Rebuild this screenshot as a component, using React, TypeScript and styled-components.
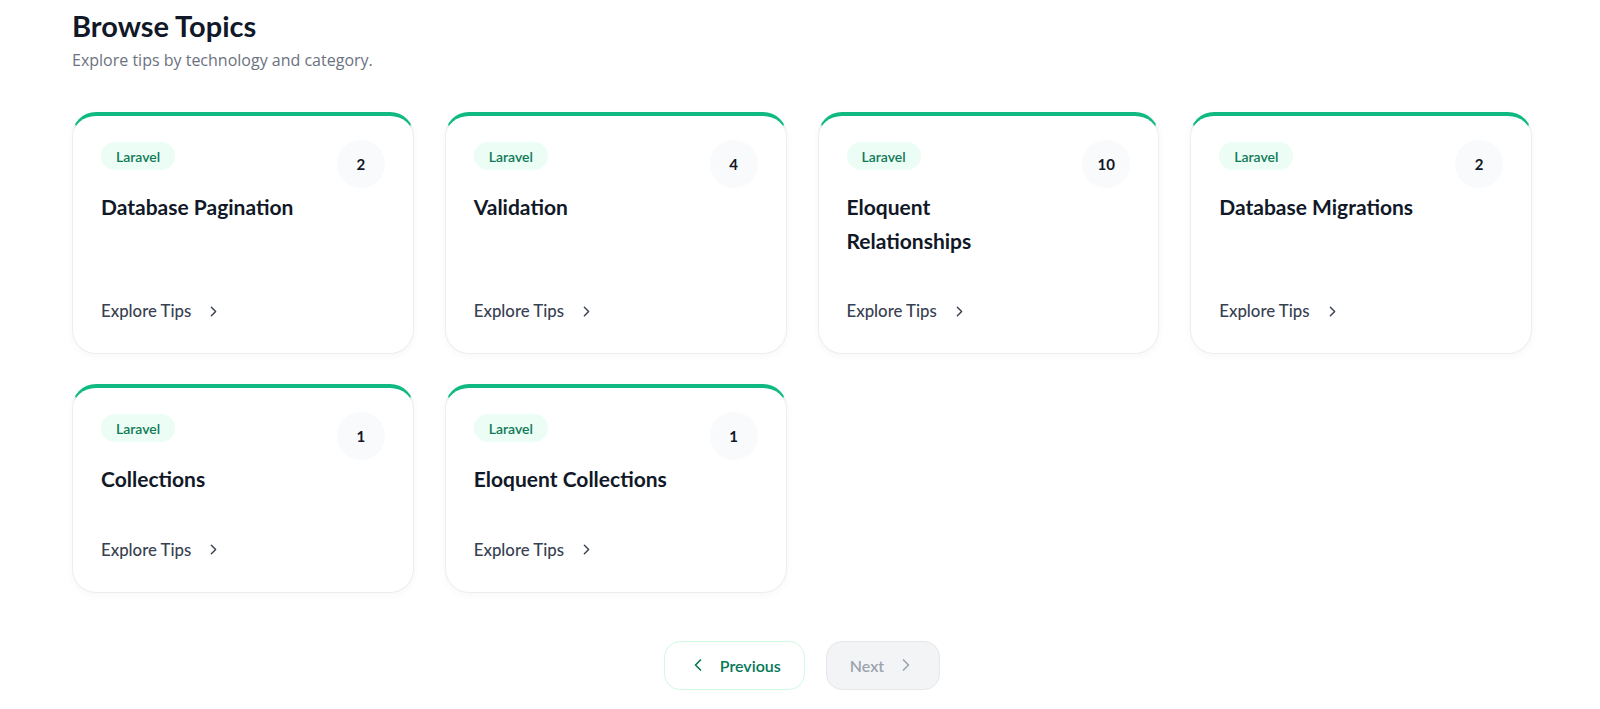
import React from "react";
import styled, { createGlobalStyle } from "styled-components";

const GlobalStyle = createGlobalStyle`
  html, body { margin: 0; padding: 0; background: #ffffff; }
  body { font-family: Lato, "Open Sans", sans-serif; -webkit-font-smoothing: antialiased; }
  * { box-sizing: border-box; }
`;

const Page = styled.main`
  padding: 8px 0 0 72px;
  width: 1532px;
`;

const Heading = styled.h1`
  margin: 0;
  font-size: 29px;
  line-height: 36px;
  font-weight: 700;
  color: #111827;
`;

const Subtitle = styled.p`
  margin: 5px 0 0;
  font-family: "Open Sans", Lato, sans-serif;
  font-size: 16px;
  line-height: 22px;
  color: #6b7280;
`;

const Grid = styled.div`
  margin-top: 41px;
  display: grid;
  grid-template-columns: repeat(4, 1fr);
  column-gap: 31px;
  row-gap: 30px;
`;

const Card = styled.article`
  display: flex;
  flex-direction: column;
  background: #ffffff;
  border: 1px solid #ebeef1;
  border-top: 4px solid #10b981;
  border-radius: 24px;
  padding: 24px 28px 30px;
  box-shadow: 0 2px 8px rgba(15, 23, 42, 0.035);
`;

const Header = styled.div`
  display: flex;
  justify-content: space-between;
  align-items: flex-start;
  gap: 24px;
`;

const Info = styled.div`
  display: flex;
  flex-direction: column;
  align-items: flex-start;
  min-width: 0;
`;

const Badge = styled.span`
  margin-top: 2px;
  display: inline-flex;
  align-items: center;
  height: 28px;
  padding: 0 15px;
  border-radius: 999px;
  background: #ecfdf5;
  color: #0f7a58;
  font-size: 14px;
  font-weight: 600;
`;

const Title = styled.h2`
  margin: 20px 0 0;
  font-size: 21px;
  line-height: 33.6px;
  font-weight: 700;
  color: #111827;
`;

const Count = styled.span`
  flex: 0 0 48px;
  width: 48px;
  height: 48px;
  border-radius: 50%;
  background: #f8fafc;
  display: flex;
  align-items: center;
  justify-content: center;
  font-size: 15px;
  font-weight: 700;
  color: #111827;
`;

const Footer = styled.a`
  margin-top: auto;
  padding-top: 42px;
  display: inline-flex;
  align-items: center;
  gap: 14px;
  font-size: 16.8px;
  line-height: 24px;
  font-weight: 500;
  color: #374151;
  text-decoration: none;
`;

const Pagination = styled.nav`
  margin-top: 48px;
  display: flex;
  justify-content: center;
  gap: 21px;
`;

const PageButton = styled.button<{ $disabled?: boolean }>`
  height: 49px;
  padding: 0 23px;
  display: inline-flex;
  align-items: center;
  gap: 12px;
  border-radius: 16px;
  font-family: Lato, sans-serif;
  font-size: 16px;
  font-weight: 600;
  border: 1px solid ${(p) => (p.$disabled ? "#e5e7eb" : "#d1fae5")};
  background: ${(p) => (p.$disabled ? "#f3f4f6" : "#ffffff")};
  color: ${(p) => (p.$disabled ? "#9ca3af" : "#047857")};
  cursor: ${(p) => (p.$disabled ? "not-allowed" : "pointer")};
`;

const Chevron = ({ dir, size }: { dir: "left" | "right"; size: number }) => (
  <svg
    width={size}
    height={size}
    viewBox="0 0 24 24"
    fill="none"
    stroke="currentColor"
    strokeWidth={2}
    strokeLinecap="round"
    strokeLinejoin="round"
  >
    <path d={dir === "left" ? "m15 18-6-6 6-6" : "m9 18 6-6-6-6"} />
  </svg>
);

const topics = [
  { title: "Database Pagination", count: 2 },
  { title: "Validation", count: 4 },
  { title: "Eloquent Relationships", count: 10 },
  { title: "Database Migrations", count: 2 },
  { title: "Collections", count: 1 },
  { title: "Eloquent Collections", count: 1 },
];

export default function App() {
  return (
    <>
      <GlobalStyle />
      <Page>
        <Heading>Browse Topics</Heading>
        <Subtitle>Explore tips by technology and category.</Subtitle>
        <Grid>
          {topics.map((t) => (
            <Card key={t.title}>
              <Header>
                <Info>
                  <Badge>Laravel</Badge>
                  <Title>{t.title}</Title>
                </Info>
                <Count>{t.count}</Count>
              </Header>
              <Footer href="#">
                Explore Tips
                <Chevron dir="right" size={17} />
              </Footer>
            </Card>
          ))}
        </Grid>
        <Pagination>
          <PageButton>
            <Chevron dir="left" size={20} />
            Previous
          </PageButton>
          <PageButton $disabled disabled>
            Next
            <Chevron dir="right" size={20} />
          </PageButton>
        </Pagination>
      </Page>
    </>
  );
}
